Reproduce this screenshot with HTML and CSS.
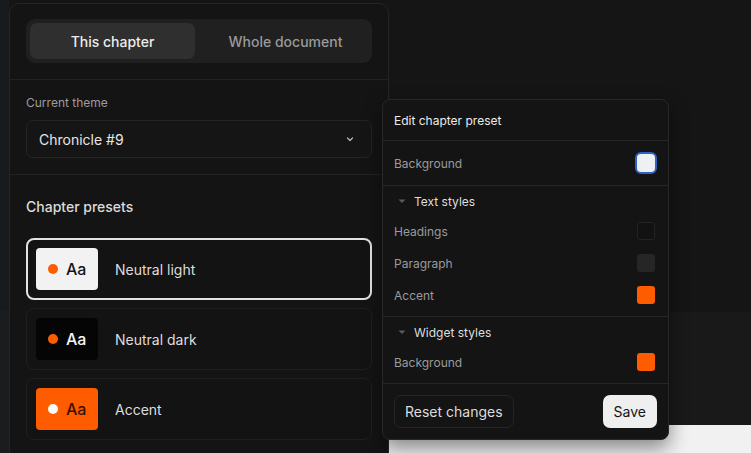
FILE: index.html
```html
<!DOCTYPE html>
<html>
<head>
<meta charset="utf-8">
<link rel="stylesheet" href="styles.css">
</head>
<body>
<div class="stage">
  <aside class="panel">
    <section class="sec sec-tabs">
      <div class="seg">
        <button class="seg-btn active">This chapter</button>
        <button class="seg-btn">Whole document</button>
      </div>
    </section>
    <section class="sec sec-theme">
      <div class="label">Current theme</div>
      <div class="select">
        <span>Chronicle #9</span>
        <svg class="chev" width="10" height="10" viewBox="0 0 10 10"><path d="M2.5 4l2.5 2.5L7.5 4" fill="none" stroke="#b5b5b5" stroke-width="1.3" stroke-linecap="round" stroke-linejoin="round"/></svg>
      </div>
    </section>
    <section class="sec sec-presets">
      <div class="title">Chapter presets</div>
      <div class="cards">
        <div class="card selected">
          <div class="sw sw-light"><span class="dot"></span><span class="aa">Aa</span></div>
          <span class="card-name">Neutral light</span>
        </div>
        <div class="card">
          <div class="sw sw-dark"><span class="dot"></span><span class="aa">Aa</span></div>
          <span class="card-name">Neutral dark</span>
        </div>
        <div class="card">
          <div class="sw sw-accent"><span class="dot"></span><span class="aa">Aa</span></div>
          <span class="card-name">Accent</span>
        </div>
      </div>
    </section>
  </aside>

  <div class="pop">
    <div class="pop-head">Edit chapter preset</div>
    <div class="pop-row-main">
      <span class="row-label">Background</span>
      <span class="cbox cbox-focus"></span>
    </div>
    <div class="pop-sec">
      <div class="grp-head"><svg width="10" height="10" viewBox="0 0 10 10"><path d="M1.5 3.5h7L5 7z" fill="#5a5a5a"/></svg><span>Text styles</span></div>
      <div class="row"><span class="row-label">Headings</span><span class="cbox c-head"></span></div>
      <div class="row"><span class="row-label">Paragraph</span><span class="cbox c-para"></span></div>
      <div class="row"><span class="row-label">Accent</span><span class="cbox c-orange"></span></div>
    </div>
    <div class="pop-sec">
      <div class="grp-head"><svg width="10" height="10" viewBox="0 0 10 10"><path d="M1.5 3.5h7L5 7z" fill="#5a5a5a"/></svg><span>Widget styles</span></div>
      <div class="row"><span class="row-label">Background</span><span class="cbox c-orange"></span></div>
    </div>
    <div class="pop-foot">
      <button class="btn btn-ghost">Reset changes</button>
      <button class="btn btn-save">Save</button>
    </div>
  </div>
</div>
</body>
</html>
```

FILE: styles.css
```css
* { box-sizing: border-box; }
html, body { margin: 0; height: 100%; }
body {
  font-family: Inter, "Noto Sans", sans-serif;
  overflow: hidden;
  background:
    linear-gradient(to bottom, #f1f1f1, #f1f1f1) 389px 425px / 362px 28px no-repeat,
    linear-gradient(to bottom, #191919, #191919) 389px 312px / 362px 113px no-repeat,
    linear-gradient(to bottom, #181b1e 0, #181b1e 310px, #1b1c1d 310px) 0 0 / 9px 100% no-repeat,
    #151515;
}
.stage {
  position: relative;
  width: 751px;
  height: 453px;
  padding: 3px 0 0 9px;
}
.panel {
  width: 380px;
  height: 470px;
  background: #141414;
  border: 1px solid #252525;
  border-radius: 10px;
}
.sec { padding: 15px 16px 16px; border-bottom: 1px solid #222; }
.seg {
  display: flex;
  height: 44px;
  padding: 4px;
  background: #202020;
  border-radius: 9px;
}
.seg-btn {
  flex: 1;
  border: 0;
  background: transparent;
  font: 500 14px Inter, sans-serif;
  color: #9a9a9a;
  border-radius: 7px;
  padding: 0 0 0 8px;
}
.seg-btn.active { background: #2f2f2f; color: #ececec; flex: 0 0 165px; padding: 0; }
.label { font-size: 12px; line-height: 16px; color: #9d9d9d; margin-bottom: 9px; }
.select {
  height: 38px;
  border: 1px solid #242424;
  border-radius: 7px;
  background: #151515;
  display: flex;
  align-items: center;
  justify-content: space-between;
  padding: 0 16px 0 12px;
  font-size: 14px;
  color: #e6e6e6;
}
.sec-presets { padding-top: 22px; border-bottom: 0; }
.title { font-size: 14px; line-height: 20px; font-weight: 500; color: #dcdcdc; margin-bottom: 21px; }
.cards { display: flex; flex-direction: column; gap: 8px; }
.card {
  display: flex;
  align-items: center;
  gap: 17px;
  padding: 9px;
  border: 1px solid #1f1f1f;
  border-radius: 8px;
  background: #131313;
}
.card.selected { border: 2px solid #e3e3e3; padding: 8px 8px; }
.sw {
  width: 62px;
  height: 42px;
  border-radius: 4px;
  display: flex;
  align-items: center;
  gap: 8px;
  padding-left: 12px;
}
.dot { width: 10px; height: 10px; border-radius: 50%; background: #ff5c00; }
.aa { font-size: 16px; font-weight: 500; }
.sw-light { background: #f2f2f2; color: #151515; }
.sw-dark { background: #050505; color: #f5f5f5; }
.sw-accent { background: #ff5c00; color: #3a1100; }
.sw-accent .dot { background: #fafafa; }
.card-name { font-size: 14px; color: #dddddd; }

.pop {
  position: absolute;
  left: 382px;
  top: 99px;
  width: 287px;
  background: #141414;
  border: 1px solid #282828;
  border-radius: 8px;
  box-shadow: 0 8px 20px rgba(0,0,0,0.45);
}
.pop-head {
  height: 41px;
  padding: 0 11px;
  display: flex;
  align-items: center;
  font-size: 12px;
  color: #ececec;
  border-bottom: 1px solid #262626;
}
.pop-row-main {
  height: 45px;
  padding: 0 11px 0 11px;
  display: flex;
  align-items: center;
  justify-content: space-between;
  border-bottom: 1px solid #262626;
}
.row-label { font-size: 12px; color: #9b9b9b; }
.pop-sec { padding: 5px 12px 5px 11px; border-bottom: 1px solid #262626; }
.grp-head {
  height: 20px;
  display: flex;
  align-items: center;
  gap: 7px;
  padding-left: 3px;
  margin-bottom: 4px;
  font-size: 12px;
  color: #dedede;
}
.row {
  height: 32px;
  display: flex;
  align-items: center;
  justify-content: space-between;
  padding-right: 1px;
}
.cbox { width: 18px; height: 18px; border-radius: 3px; }
.cbox-focus {
  width: 22px; height: 22px;
  background: #eef0f3;
  border: 2px solid #2d63c8;
  border-radius: 6px;
}
.c-head { background: #121212; border: 1px solid #232323; }
.c-para { background: #262626; }
.c-orange { background: #ff5c00; }
.pop-foot {
  padding: 11px 11px 11px 11px;
  display: flex;
  justify-content: space-between;
}
.btn {
  height: 33px;
  padding: 0 10px;
  border-radius: 7px;
  font: 400 14px Inter, sans-serif;
}
.btn-ghost { background: #141414; border: 1px solid #262626; color: #dcdcdc; }
.btn-save { background: #efefef; border: 0; color: #151515; padding: 0 11px; }
```
